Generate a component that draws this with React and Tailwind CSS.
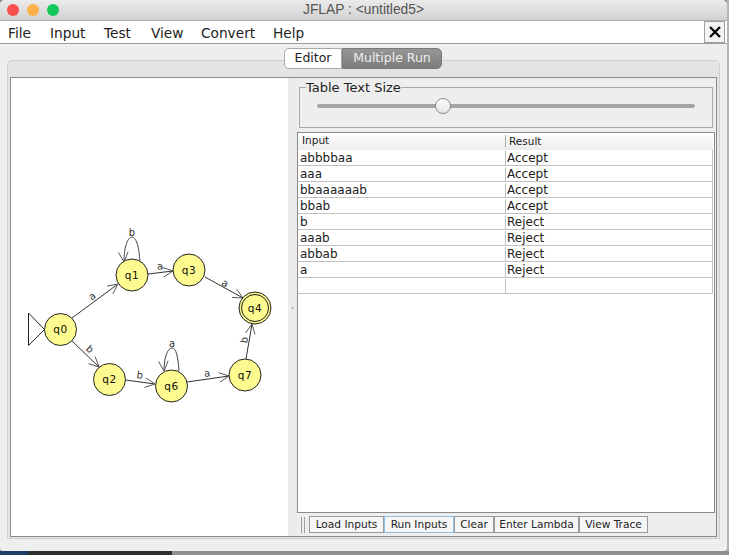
import React from "react";

const FONT = '"DejaVu Sans", "Noto Sans", sans-serif';

const nodes = [
  ["q0", 60.5, 329.5],
  ["q1", 132, 275],
  ["q2", 109.5, 379.5],
  ["q3", 189, 270],
  ["q4", 255, 308],
  ["q6", 171.5, 386],
  ["q7", 245, 375],
];

const edges = [
  [72, 318, 118, 284],
  [72, 341, 99, 367],
  [148, 274, 173, 271],
  [205, 277, 243, 298],
  [125.5, 380, 155, 384],
  [187, 382, 229, 376],
  [246, 359, 252, 324],
];

const labels = [
  ["a", 92, 296, -38],
  ["b", 90, 349, 42],
  ["b", 132, 232, 0],
  ["a", 160, 266, -5],
  ["a", 225, 283, 28],
  ["b", 140, 375, 8],
  ["a", 172, 343, 0],
  ["a", 207, 373, -8],
  ["b", 244, 340, -80],
];

function Head({ x, y, angle }) {
  const len = 11;
  const spread = 0.45;
  const p = (a) => `${x - len * Math.cos(a)},${y - len * Math.sin(a)}`;
  return (
    <polyline
      points={`${p(angle - spread)} ${x},${y} ${p(angle + spread)}`}
      fill="none"
      stroke="#555555"
      strokeWidth="1"
    />
  );
}

function Graph() {
  return (
    <svg viewBox="11 78 277 458" className="block h-full w-full" style={{ fontFamily: FONT }}>
      <polygon points="28.5,313 28.5,345.5 44.5,329.5" fill="#fff" stroke="#222" strokeWidth="1" />
      {edges.map(([a, b, c, d], i) => (
        <g key={i}>
          <line x1={a} y1={b} x2={c} y2={d} stroke="#333" strokeWidth="1" />
          <Head x={c} y={d} angle={Math.atan2(d - b, c - a)} />
        </g>
      ))}
      <path d="M124 262 C124 246 128 237 132 237 C136 237 139 246 140 262" fill="none" stroke="#444" />
      <Head x={124} y={262} angle={1.5} />
      <path d="M164 371 C164 356 168 348 172 348 C176 348 178 356 179 371" fill="none" stroke="#444" />
      <Head x={164} y={371} angle={1.5} />
      {nodes.map(([name, x, y]) => (
        <g key={name}>
          <circle cx={x} cy={y} r="16" fill="#fdfa8f" stroke="#222" strokeWidth="1" />
          {name === "q4" && <circle cx={x} cy={y} r="13.5" fill="none" stroke="#222" strokeWidth="1" />}
          <text x={x} y={y + 3.5} textAnchor="middle" fontSize="10.5" letterSpacing="0.6" fill="#111">
            {name}
          </text>
        </g>
      ))}
      {labels.map(([t, x, y, r], i) => (
        <text key={i} x={x} y={y + 3.5} textAnchor="middle" fontSize="10" fill="#333" transform={`rotate(${r} ${x} ${y})`}>
          {t}
        </text>
      ))}
    </svg>
  );
}

const rows = [
  ["abbbbaa", "Accept"],
  ["aaa", "Accept"],
  ["bbaaaaaab", "Accept"],
  ["bbab", "Accept"],
  ["b", "Reject"],
  ["aaab", "Reject"],
  ["abbab", "Reject"],
  ["a", "Reject"],
  ["", ""],
];

const buttons = [
  ["Load Inputs", "w-[75px] border-[#9a9a9a]"],
  ["Run Inputs", "w-[70px] border-[#8fc0ea]"],
  ["Clear", "w-[40px] border-[#9a9a9a]"],
  ["Enter Lambda", "w-[85px] border-[#9a9a9a]"],
  ["View Trace", "w-[69px] border-[#9a9a9a]"],
];

export default function App() {
  return (
    <div className="flex h-[555px] w-[729px] flex-col overflow-hidden bg-[#8f8f8f] text-[#1a1a1a]" style={{ fontFamily: FONT }}>
      <div className="flex h-[551px] w-full">
        <div className="flex h-full w-[727px] flex-col overflow-hidden rounded-t-[5px] rounded-b-[3px] bg-[#eeeeee]">
          {/* title bar */}
          <div className="relative flex h-[21px] shrink-0 items-center justify-center border-b border-[#b0b0b0] bg-gradient-to-b from-[#ebebeb] to-[#d2d2d2]">
            <div className="absolute left-[7px] top-[4px] flex gap-2">
              <span className="h-3 w-3 rounded-full bg-[#f9504f]" />
              <span className="h-3 w-3 rounded-full bg-[#fdb047]" />
              <span className="h-3 w-3 rounded-full bg-[#13c95b]" />
            </div>
            <span className="text-[13.8px] text-[#555555]" style={{ fontFamily: '"Liberation Sans", sans-serif' }}>
              JFLAP : &lt;untitled5&gt;
            </span>
          </div>
          {/* menu bar */}
          <div className="flex h-[23px] shrink-0 items-center border-b border-[#9c9c9c] bg-white pl-2 pr-[2px] pt-[2px] text-[13.7px] text-[#222222]">
            <span className="w-[42px]">File</span>
            <span className="w-[54px]">Input</span>
            <span className="w-[47px]">Test</span>
            <span className="w-[50px]">View</span>
            <span className="w-[72px]">Convert</span>
            <span>Help</span>
            <button className="-mt-[2px] ml-auto flex h-[22px] w-[21px] items-center justify-center border border-[#a0a0a0] bg-[#f4f4f4]">
              <svg viewBox="0 0 12 12" className="h-3 w-3">
                <path d="M1 1 L11 11 M11 1 L1 11" stroke="#000" strokeWidth="2.2" />
              </svg>
            </button>
          </div>
          {/* tabs + pane */}
          <div className="flex min-h-0 flex-1 flex-col px-[7px] pb-[12px] pt-[4px]">
            <div className="relative z-10 flex h-[21px] shrink-0 justify-center pr-[1px] text-[12.5px]">
              <div className="flex w-[58px] items-center justify-center rounded-l-[5px] border border-[#a9a9a9] bg-white text-[#222222]">
                Editor
              </div>
              <div className="flex w-[100px] items-center justify-center rounded-r-[5px] border border-[#7a7a7a] bg-gradient-to-b from-[#969696] to-[#7c7c7c] text-[#eeeeee]">
                Multiple Run
              </div>
            </div>
            <div className="-mt-[9px] flex min-h-0 flex-1 flex-col rounded-t-[5px] border border-[#cfcfcf] bg-[#e4e4e4] px-[2px] pb-[1px] pt-[16px]">
              <div className="flex min-h-0 flex-1 border border-[#8a8a8a] bg-[#eeeeee]">
                <div className="h-full w-[277px] shrink-0 bg-white">
                  <Graph />
                </div>
                {/* split divider */}
                <div className="flex w-[9px] shrink-0 items-center justify-center bg-[#ebebeb] pt-[2px]">
                  <span className="text-[7px] leading-none text-[#777777]">‹</span>
                </div>
                {/* right panel */}
                <div className="flex min-w-0 flex-1 flex-col pr-[1px]">
                  <fieldset className="mx-[2px] mt-[2px] h-[48px] shrink-0 border border-[#a8a8a8] pl-[6px] pr-[17px]">
                    <legend className="px-0 text-[13px] leading-[15px] text-[#222222]">Table Text Size</legend>
                    <div className="relative ml-[11px] mt-[9px] h-[4px] rounded-full bg-[#a4a4a4]">
                      <span className="absolute left-[118px] top-[-6px] h-4 w-4 rounded-full border border-[#8a8a8a] bg-gradient-to-b from-white to-[#e4e4e4]" />
                    </div>
                  </fieldset>
                  {/* table */}
                  <div className="mt-[4px] flex min-h-0 flex-1 flex-col border border-[#8a8a8a] bg-white pr-[1px] text-[12px]">
                    <div className="flex h-[17px] shrink-0 items-center bg-gradient-to-b from-white to-[#ececec] pb-[1px] text-[10.5px] text-[#222222]">
                      <span className="w-[207px] shrink-0 pl-[4px]">Input</span>
                      <span className="h-[12px] border-l border-[#a8a8a8] pl-[3px] leading-[12px]">Result</span>
                    </div>
                    {rows.map(([a, b], i) => (
                      <div key={i} className="flex h-[16px] shrink-0 items-center border-b border-r border-[#c2c2c2] pt-[1px] leading-[15px] text-[#222222]">
                        <span className="h-full w-[207px] shrink-0 pl-[2px]">{a}</span>
                        <span className="h-full flex-1 border-l border-[#c2c2c2] pl-[1px]">{b}</span>
                      </div>
                    ))}
                  </div>
                  {/* toolbar */}
                  <div className="flex h-[23px] shrink-0 items-start pl-[4px] pt-[3px]">
                    <span className="mr-[4px] mt-[1px] h-[16px] w-[4px] border-x border-[#a0a0a0]" />
                    {buttons.map(([t, c]) => (
                      <button key={t} className={`flex h-[17px] shrink-0 items-center justify-center border bg-[#f6f6f6] text-[10.6px] text-[#222222] ${c}`}>
                        {t}
                      </button>
                    ))}
                  </div>
                </div>
              </div>
            </div>
          </div>
        </div>
        <div className="flex-1 bg-[#b4b4b4]" />
      </div>
      <div className="flex h-[4px] w-full shrink-0">
        <div className="w-[28px] bg-[#1d3f63]" />
        <div className="w-[144px] bg-[#2e2e2e]" />
        <div className="flex-1 bg-[#8f8f8f]" />
      </div>
    </div>
  );
}
